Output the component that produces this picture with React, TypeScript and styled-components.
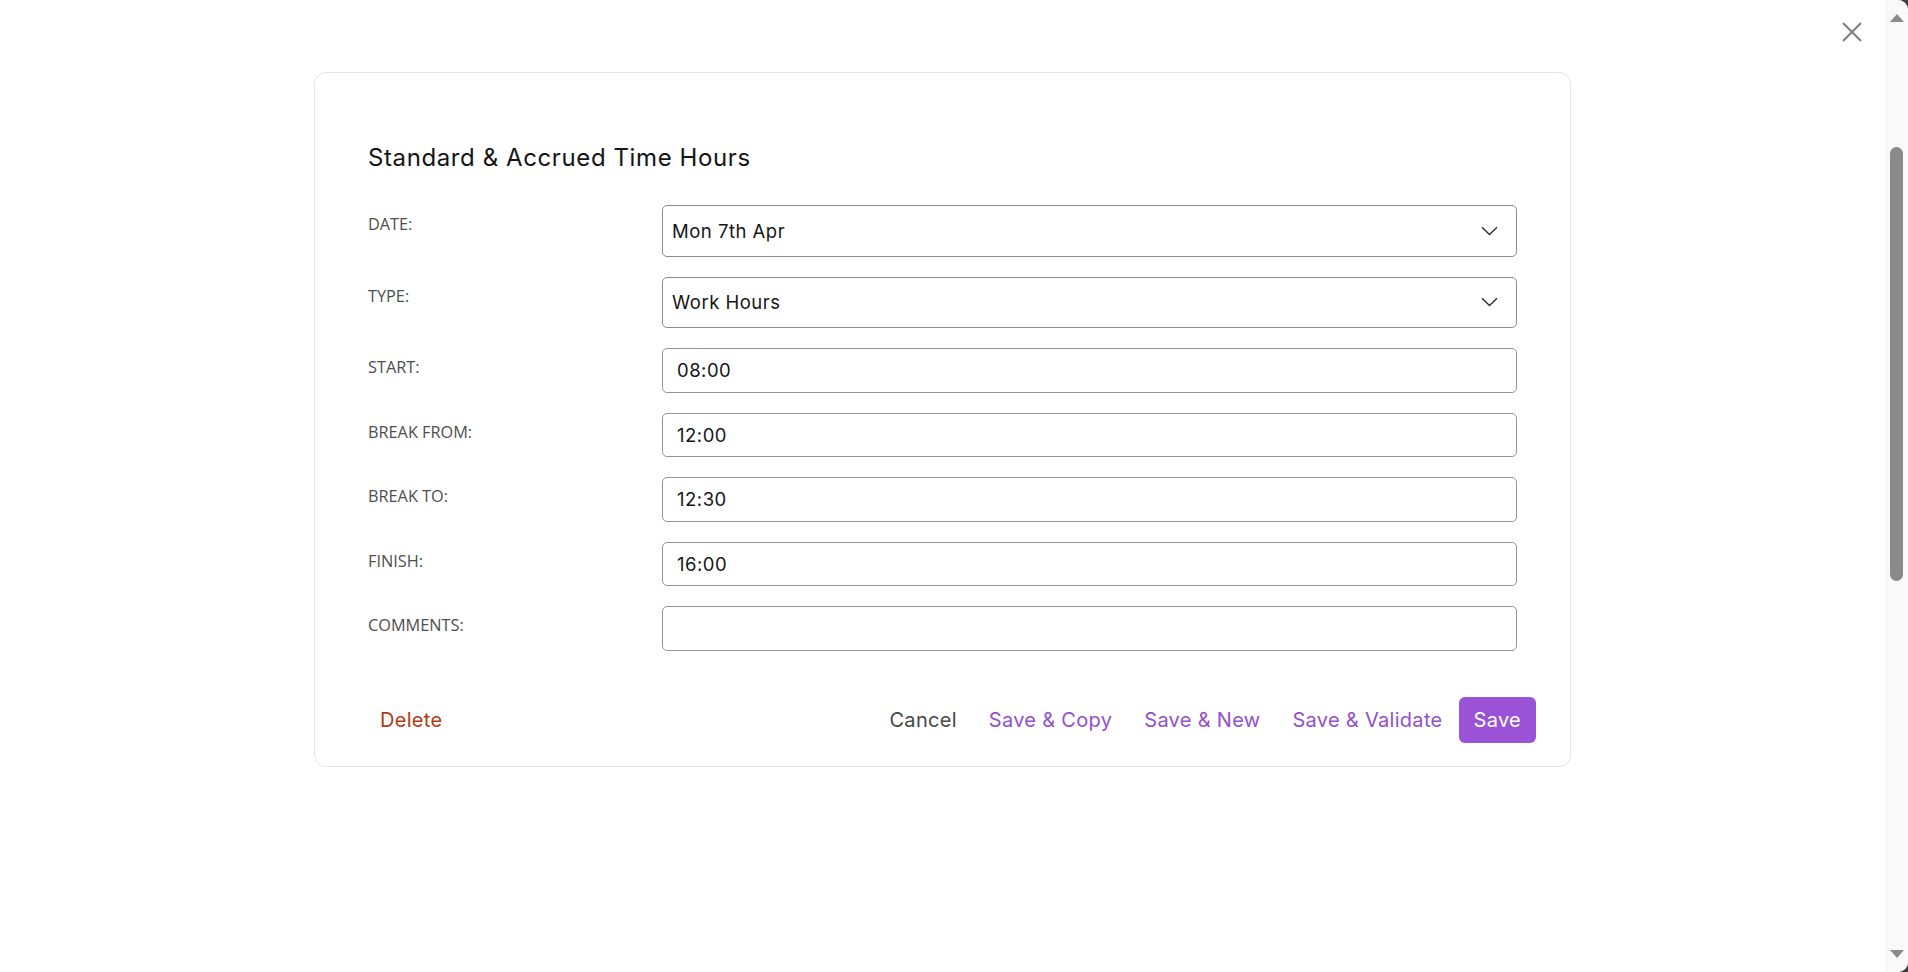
import React from "react";
import styled, { createGlobalStyle } from "styled-components";

const GlobalStyle = createGlobalStyle`
  html, body { margin: 0; padding: 0; height: 100%; overflow: hidden; background: #3d3d3d; }
  body { font-family: "Inter", "Noto Sans", sans-serif; color: #1a1a1a; }
  * { box-sizing: border-box; }
`;

const Shell = styled.div`
  display: flex;
  height: 100vh;
  background: #ffffff;
  border-radius: 0 10px 10px 0;
  overflow: hidden;
`;

const Main = styled.main`
  flex: 1;
  min-width: 0;
  padding-top: 72px;
  position: relative;
`;

const Rail = styled.div`
  width: 23px;
  flex: none;
  display: flex;
  flex-direction: column;
  background: #f9f9f9;
`;

const RailButton = styled.div`
  height: 36px;
  flex: none;
  display: flex;
  align-items: center;
  justify-content: center;
`;

const RailTrack = styled.div<{ $offset: number }>`
  flex: 1;
  padding: ${(p) => p.$offset}px 5px 0;
`;

const RailThumb = styled.div<{ $length: number }>`
  height: ${(p) => p.$length}px;
  border-radius: 7px;
  background: #8a8a8a;
`;

const CloseButton = styled.button`
  position: absolute;
  top: 12px;
  right: 13px;
  width: 40px;
  height: 40px;
  padding: 0;
  border: none;
  background: transparent;
  display: flex;
  align-items: center;
  justify-content: center;
  cursor: pointer;
`;

const Card = styled.section`
  width: 1257px;
  margin: 0 auto;
  border: 1px solid #e4e4e4;
  border-radius: 12px;
  background: #ffffff;
  padding: 70px 0 23px;
`;

const Body = styled.div`
  padding: 0 53px;
`;

const Title = styled.h2`
  margin: 0 0 32px;
  font-family: "Inter", sans-serif;
  font-size: 24px;
  line-height: 30px;
  font-weight: 400;
  letter-spacing: 0.6px;
  color: #141414;
`;

const Form = styled.div`
  display: grid;
  grid-template-columns: 294px 1fr;
  row-gap: 20px;
`;

const Label = styled.label`
  align-self: start;
  padding-top: 8px;
  font-family: "Open Sans", "Noto Sans", sans-serif;
  font-size: 16.3px;
  line-height: 22px;
  color: #4e4e4e;
  text-transform: uppercase;
`;

const SelectBox = styled.div`
  height: 51.5px;
  display: flex;
  align-items: center;
  justify-content: space-between;
  padding: 0 18px 0 9px;
  border: 1px solid #8c8c8c;
  border-radius: 5px;
  font-family: "Inter", sans-serif;
  font-size: 18.5px;
  letter-spacing: 0.5px;
  color: #161616;
  cursor: pointer;
`;

const TextInput = styled.input`
  height: 44.5px;
  width: 100%;
  padding: 0 14px;
  border: 1px solid #959595;
  border-radius: 5px;
  font-family: "Inter", sans-serif;
  font-size: 18.5px;
  letter-spacing: 0.5px;
  color: #161616;
  background: #ffffff;
  outline: none;
`;

const Footer = styled.div`
  display: flex;
  align-items: center;
  justify-content: space-between;
  padding: 46.5px 34px 0 49px;
`;

const Actions = styled.div`
  display: flex;
  align-items: center;
`;

type Tone = "danger" | "neutral" | "accent" | "primary";

const toneColor: Record<Tone, string> = {
  danger: "#b23a17",
  neutral: "#464646",
  accent: "#9250cc",
  primary: "#ffffff",
};

const ActionButton = styled.button<{ $tone: Tone }>`
  height: 46px;
  padding: 0 ${(p) => (p.$tone === "primary" ? "15px" : "16px")};
  border: none;
  border-radius: 6px;
  background: ${(p) => (p.$tone === "primary" ? "#9a52d6" : "transparent")};
  color: ${(p) => toneColor[p.$tone]};
  font-family: "Inter", sans-serif;
  font-size: 20px;
  letter-spacing: 0.3px;
  font-weight: 400;
  cursor: pointer;
`;

const Chevron = () => (
  <svg width="17" height="10" viewBox="0 0 17 10" fill="none">
    <polyline points="1,1.2 8.5,8.6 16,1.2" stroke="#2e2e2e" strokeWidth="1.4" />
  </svg>
);

const CloseIcon = () => (
  <svg width="20" height="20" viewBox="0 0 20 20" fill="none">
    <line x1="1" y1="1" x2="19" y2="19" stroke="#7d7d7d" strokeWidth="1.9" />
    <line x1="19" y1="1" x2="1" y2="19" stroke="#7d7d7d" strokeWidth="1.9" />
  </svg>
);

const RailArrow = ({ down }: { down?: boolean }) => (
  <svg width="14" height="8" viewBox="0 0 14 8">
    <polygon points={down ? "0,0 14,0 7,8" : "0,8 14,8 7,0"} fill="#8a8a8a" />
  </svg>
);

type Field = { label: string; kind: "select" | "text"; value: string };

const fields: Field[] = [
  { label: "Date:", kind: "select", value: "Mon 7th Apr" },
  { label: "Type:", kind: "select", value: "Work Hours" },
  { label: "Start:", kind: "text", value: "08:00" },
  { label: "Break From:", kind: "text", value: "12:00" },
  { label: "Break To:", kind: "text", value: "12:30" },
  { label: "Finish:", kind: "text", value: "16:00" },
  { label: "Comments:", kind: "text", value: "" },
];

export default function App() {
  return (
    <>
      <GlobalStyle />
      <Shell>
        <Main>
          <CloseButton aria-label="Close">
            <CloseIcon />
          </CloseButton>
          <Card>
            <Body>
              <Title>Standard &amp; Accrued Time Hours</Title>
              <Form>
                {fields.map((f) => (
                  <React.Fragment key={f.label}>
                    <Label>{f.label}</Label>
                    {f.kind === "select" ? (
                      <SelectBox>
                        <span>{f.value}</span>
                        <Chevron />
                      </SelectBox>
                    ) : (
                      <TextInput defaultValue={f.value} />
                    )}
                  </React.Fragment>
                ))}
              </Form>
            </Body>
            <Footer>
              <ActionButton $tone="danger">Delete</ActionButton>
              <Actions>
                <ActionButton $tone="neutral">Cancel</ActionButton>
                <ActionButton $tone="accent">Save &amp; Copy</ActionButton>
                <ActionButton $tone="accent">Save &amp; New</ActionButton>
                <ActionButton $tone="accent">Save &amp; Validate</ActionButton>
                <ActionButton $tone="primary">Save</ActionButton>
              </Actions>
            </Footer>
          </Card>
        </Main>
        <Rail aria-hidden>
          <RailButton>
            <RailArrow />
          </RailButton>
          <RailTrack $offset={111}>
            <RailThumb $length={434} />
          </RailTrack>
          <RailButton>
            <RailArrow down />
          </RailButton>
        </Rail>
      </Shell>
    </>
  );
}
